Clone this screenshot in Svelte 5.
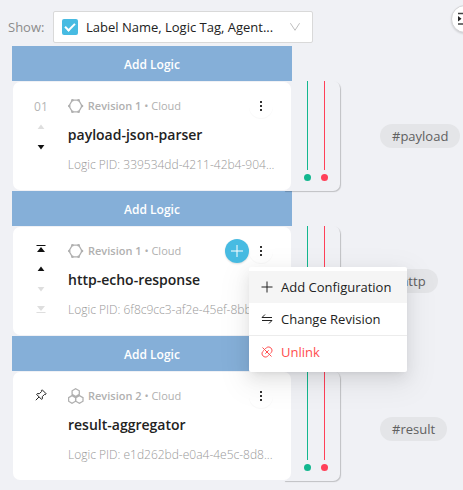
<script>
  const rows = [
    { name: 'payload-json-parser', rev: 'Revision 1', pid: '339534dd-4211-42b4-904...', tag: '#payload', icon: 'hex', order: 'first' },
    { name: 'http-echo-response', rev: 'Revision 1', pid: '6f8c9cc3-af2e-45ef-8bb0...', tag: '#http', icon: 'hex', order: 'middle' },
    { name: 'result-aggregator', rev: 'Revision 2', pid: 'e1d262bd-e0a4-4e5c-8d8...', tag: '#result', icon: 'cluster', order: 'pinned' }
  ];
</script>

{#snippet up(cls)}
  <svg class={cls} width="10" height="6" viewBox="0 0 10 6"><path d="M5 0.6 8.4 5H1.6Z" /></svg>
{/snippet}
{#snippet down(cls)}
  <svg class={cls} width="10" height="6" viewBox="0 0 10 6"><path d="M5 5.4 8.4 1H1.6Z" /></svg>
{/snippet}

<main>
  <header>
    <label class="show" for="show">Show:</label>
    <div class="picker">
      <input type="checkbox" checked aria-label="Show all fields" />
      <select id="show"><option>Label Name, Logic Tag, Agent...</option></select>
      <svg class="chevron" width="12" height="12" viewBox="0 0 12 12"><path d="M1.4 2.2 6 9.3 10.6 2.2" /></svg>
    </div>
    <button class="outline" aria-label="Expand panel">
      <svg width="16" height="14" viewBox="0 0 16 14"><path d="M1 1.5H15M7 5H15M7 8.5H15M1 12H15" /><path class="fill" d="M1 4 4.5 6.8 1 9.6Z" /></svg>
    </button>
  </header>

  {#each rows as row}
    <section>
      <button class="add">Add Logic</button>
      <div class="row">
        <article>
          <div class="order">
            {#if row.order === 'first'}
              <span class="num">01</span>
              <button class="step a" disabled aria-label="Move up">{@render up('off')}</button>
              <button class="step b" aria-label="Move down">{@render down('on')}</button>
            {:else if row.order === 'middle'}
              <button class="step top" aria-label="Move to top"><svg class="on" width="10" height="8" viewBox="0 0 10 8"><path d="M0.5 0H9.5V1H0.5ZM5 2 9 7H1Z" /></svg></button>
              <button class="step" aria-label="Move up">{@render up('on')}</button>
              <button class="step" disabled aria-label="Move down">{@render down('off')}</button>
              <button class="step" disabled aria-label="Move to bottom"><svg class="off" width="10" height="8" viewBox="0 0 10 8"><path d="M0.5 7H9.5V8H0.5ZM5 6 9 1H1Z" /></svg></button>
            {:else}
              <button class="step pin" aria-label="Pinned"><svg width="12" height="12" viewBox="0 0 12 12"><path d="M7.2 0.8 11.2 4.8 10.2 5.6 9.5 5.4 7.4 7.5 7.3 9.8 6.6 10.4 1.6 5.4 2.2 4.7 4.5 4.6 6.6 2.5 6.4 1.6ZM4 8 0.8 11.2" /></svg></button>
            {/if}
          </div>
          <div class="info">
            <div class="meta">
              {#if row.icon === 'hex'}
                <svg width="16" height="16" viewBox="0 0 16 16"><path d="M4.3 2.2H10.7L14 8 10.7 13.8H4.3L1 8Z" /><g class="dots"><circle cx="4.4" cy="2.3" r="1.3" /><circle cx="10.6" cy="2.3" r="1.3" /><circle cx="14" cy="8" r="1.3" /><circle cx="10.6" cy="13.7" r="1.3" /><circle cx="4.4" cy="13.7" r="1.3" /><circle cx="1.3" cy="8" r="1.3" /></g></svg>
              {:else}
                <svg width="16" height="16" viewBox="0 0 16 16"><path d="M7.7 0.7 11.3 2.8V6.4L7.7 8.5 4.1 6.4V2.8ZM4 7.6 7.6 9.7V13.2L4 15.3 0.6 13.2V9.7ZM11.4 7.6 15 9.7V13.2L11.4 15.3 7.8 13.2V9.7Z" /></svg>
              {/if}
              <span><b>{row.rev}</b> • Cloud</span>
            </div>
            <h2>{row.name}</h2>
            <p>Logic PID: {row.pid}</p>
          </div>
          <div class="actions">
            {#if row.order === 'middle'}
              <button class="plus" aria-label="Add"><svg width="14" height="14" viewBox="0 0 14 14"><path d="M7 1V13M1 7H13" /></svg></button>
            {/if}
            <button class="more" aria-label="More"><svg width="4" height="12" viewBox="0 0 4 12"><path d="M1 1H3V3H1ZM1 5H3V7H1ZM1 9H3V11H1Z" /></svg></button>
            {#if row.order === 'middle'}
              <div class="menu" role="menu">
                <button role="menuitem" class="hover"><svg width="12" height="12" viewBox="0 0 12 12"><path d="M6 0.5V11.5M0.5 6H11.5" /></svg>Add Configuration</button>
                <button role="menuitem"><svg width="12" height="12" viewBox="0 0 12 12"><path d="M11 4.5H1L4 1.5M1 7.5H11L8 10.5" /></svg>Change Revision</button>
                <hr />
                <button role="menuitem" class="danger"><svg width="12" height="12" viewBox="0 0 12 12"><path d="M1.5 1.5 10.5 10.5M4.2 3 5.6 1.6C8.5-.6 12.6 3.3 10.4 6.3L9 7.7M7.8 9 6.4 10.4C3.5 12.6-.6 8.7 1.6 5.7L3 4.3M4.3 7.7 7.7 4.3" /></svg>Unlink</button>
              </div>
            {/if}
          </div>
        </article>
        <div class="rail"><i class="green"></i><i class="red"></i></div>
        <span class="tag" class:low={row.order === 'pinned'}>{row.tag}</span>
      </div>
    </section>
  {/each}
</main>

<style>
  :global(body) { background: #f0f1f5; }
  main {
    box-sizing: border-box;
    min-height: 100vh;
    padding: 11px 0 9px;
    overflow: hidden;
    background: #f0f1f5;
    color: #222;
    font: 13px/20px "Open Sans", "Noto Sans", sans-serif;
  }
  button {
    display: flex;
    align-items: center;
    justify-content: center;
    margin: 0;
    padding: 0;
    border: 0;
    background: none;
    color: inherit;
    font: inherit;
  }
  svg { display: block; flex: none; fill: none; stroke: currentColor; }
  header { display: flex; align-items: center; height: 32px; padding-left: 8px; margin-bottom: 3px; }
  .show { width: 45px; color: #8c8c8c; }
  .picker {
    display: flex;
    align-items: center;
    box-sizing: border-box;
    width: 260px;
    height: 32px;
    padding: 0 11px 0 8px;
    border: 1px solid #d9d9d9;
    border-radius: 2px;
    background: #fff;
  }
  input {
    appearance: none;
    flex: none;
    display: flex;
    align-items: center;
    justify-content: center;
    width: 16px;
    height: 16px;
    margin: 0 8px 0 0;
    border-radius: 2px;
    background: #47bbe2;
  }
  input::before {
    content: "";
    width: 8px;
    height: 4px;
    margin-bottom: 3px;
    border: solid #fff;
    border-width: 0 0 2px 2px;
    transform: rotate(-45deg);
  }
  select {
    appearance: none;
    flex: 1;
    min-width: 0;
    padding: 0;
    border: 0;
    background: none;
    color: #222;
    font: inherit;
  }
  .chevron { color: #bfbfbf; }
  .outline {
    flex: none;
    width: 28px;
    height: 28px;
    margin: -16px -16px 0 auto;
    border: 1px solid #d4d4d6;
    border-radius: 50%;
    background: #fff;
    color: #444;
    box-shadow: 0 1px 2px #0002;
  }
  .outline svg { stroke-width: 1.4; }
  .fill { fill: #222; stroke: none; }
  .add {
    box-sizing: border-box;
    width: 280px;
    height: 35px;
    margin-left: 12px;
    padding-top: 2px;
    background: #85afd8;
    color: #fff;
    font-size: 12px;
    font-weight: 600;
  }
  .row { display: flex; align-items: center; height: 110px; padding-left: 13px; }
  article {
    position: relative;
    z-index: 1;
    display: flex;
    box-sizing: border-box;
    width: 278px;
    height: 108px;
    padding: 12px 18px 0 16px;
    border-radius: 7px;
    background: #fff;
  }
  .order {
    display: flex;
    flex-direction: column;
    align-items: center;
    width: 24px;
    margin-right: 15px;
    color: #b5b5b5;
    font-size: 12px;
  }
  .num { line-height: 25px; }
  .step { height: 20px; color: #111; }
  .step svg { stroke: none; fill: #111; }
  .step svg.off { fill: #dedede; }
  .step.a { height: 16px; }
  .step.b { height: 24px; }
  .step.pin { height: 22px; }
  .step.pin svg { stroke: #222; fill: none; }
  .info { min-width: 0; white-space: nowrap; color: #b0b0b0; font-size: 12px; }
  .meta { display: flex; align-items: center; gap: 4px; height: 24px; font-size: 11px; }
  .meta svg { stroke-width: 1.3; }
  .dots { fill: currentColor; stroke: none; }
  b { font-weight: 600; }
  h2 { margin: 7px 0 10px; color: #222; font-size: 14px; line-height: 20px; font-weight: 600; }
  p { margin: 0; line-height: 20px; font-weight: 300; color: #999; }
  .actions { position: absolute; top: 12px; right: 18px; display: flex; }
  .actions > button { width: 24px; height: 24px; border-radius: 50%; }
  .plus { background: #47bbe2; color: #fff; box-shadow: 0 1px 2px #0002; }
  .more { color: #333; box-shadow: 0 1px 1px #00000008; }
  .more svg { fill: currentColor; stroke: none; }
  .menu {
    position: absolute;
    z-index: 5;
    top: 28px;
    left: 24px;
    width: 158px;
    padding: 4px 0;
    box-sizing: border-box;
    border-radius: 2px;
    background: #fff;
    box-shadow: 0 3px 6px -4px #0000001f, 0 6px 16px #00000014, 0 9px 28px 8px #0000000d;
    font-size: 13px;
  }
  .menu button { width: 100%; height: 32px; justify-content: flex-start; gap: 8px; padding-left: 12px; white-space: nowrap; }
  .menu .hover { background: #f5f5f5; }
  .menu .danger { color: #ff4d4f; }
  hr { height: 1px; margin: 0; border: 0; background: #ececec; }
  section:nth-of-type(2) article { z-index: 3; }
  .rail {
    display: flex;
    justify-content: center;
    gap: 9px;
    box-sizing: border-box;
    width: 56px;
    height: 110px;
    margin-left: -7px;
    padding-left: 7px;
    border-radius: 0 7px 7px 0;
    box-shadow: 1px 1px 1px #0003;
  }
  .rail i { position: relative; width: 8px; height: 100px; display: flex; flex-direction: column; align-items: center; }
  .rail i::before { content: ""; width: 1px; flex: 1; background: currentColor; }
  .rail i::after { content: ""; width: 7px; height: 7px; margin-top: 4px; border-radius: 50%; background: currentColor; }
  .green { color: #13b78f; }
  .red { color: #ff4058; }
  .tag { margin-left: 40px; padding: 0 12px; border-radius: 12px; background: #e4e5e8; color: #606060; line-height: 24px; }
  .tag.low { margin-top: 6px; }
</style>
